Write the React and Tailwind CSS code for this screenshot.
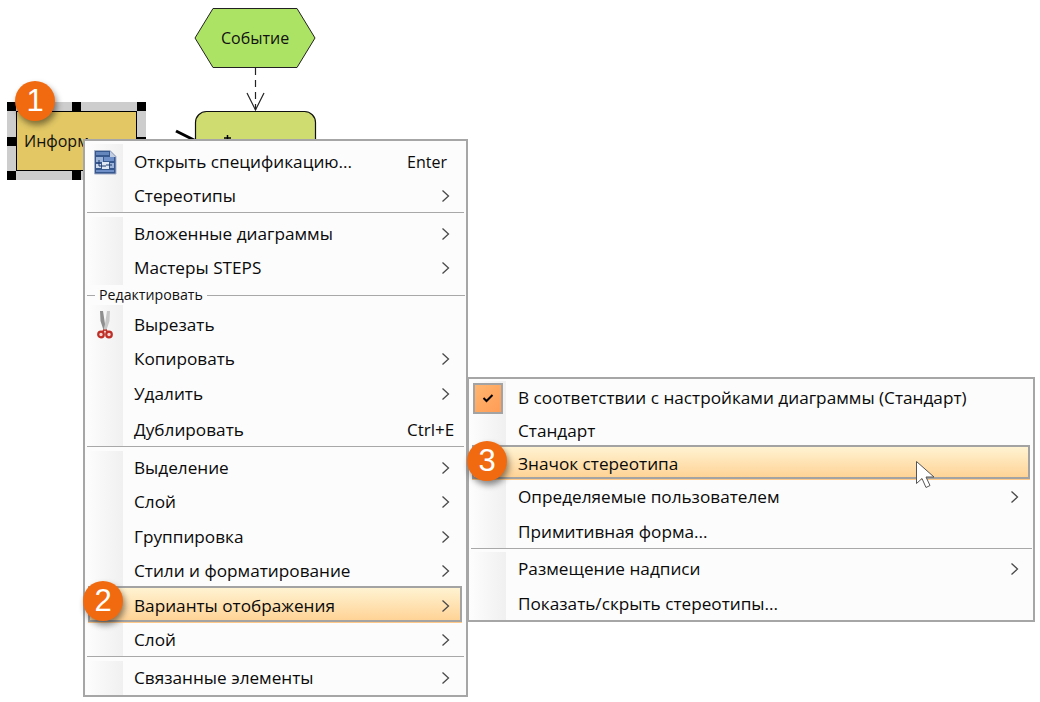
const font = { fontFamily: '"Open Sans", "Noto Sans", sans-serif' };

function Chevron() {
  return (
    <svg width="9" height="14" viewBox="0 0 9 14" className="shrink-0">
      <polyline points="1.5,1.5 7.5,7 1.5,12.5" fill="none" stroke="#4a4a4a" strokeWidth="1.3" />
    </svg>
  );
}

function SpecIcon() {
  return (
    <svg width="24" height="26" viewBox="0 0 24 26">
      <path d="M1.5 1.5 H17 L23 7.5 V25 H1.5 Z" fill="#37578f" stroke="#a7b1c6" strokeWidth="1" />
      <path d="M17 2 V8 H23 Z" fill="#c3cee0" />
      <rect x="3" y="3" width="13" height="3" fill="#6585bd" />
      <rect x="3" y="8" width="7" height="5" fill="#9db4da" />
      <rect x="11" y="8" width="10" height="4" fill="#6f8fc8" />
      <rect x="3" y="15" width="5" height="4" fill="#cdd9ec" />
      <rect x="9" y="13" width="7" height="7" fill="#dfe7f4" />
      <rect x="17" y="14" width="4" height="5" fill="#9db4da" />
      <rect x="3" y="21" width="18" height="2" fill="#6f8fc8" />
      <path d="M6 11 V17 H13 M13 16 H19" stroke="#1f3a6d" strokeWidth="1" fill="none" />
    </svg>
  );
}

function Scissors() {
  return (
    <svg width="16" height="28" viewBox="0 0 16 28">
      <path d="M3 0 L6 0 L8 13 L9.5 19 L6.5 19 L3.5 10 Z" fill="#8f8f8f" />
      <path d="M13 0 L10 0 L8 13 L6.5 19 L9.5 19 L12.5 10 Z" fill="#c8c8c8" />
      <circle cx="4" cy="23.5" r="2.8" fill="#f3d7d4" stroke="#bf2f27" strokeWidth="2.2" />
      <circle cx="12" cy="23.5" r="2.8" fill="#f3d7d4" stroke="#bf2f27" strokeWidth="2.2" />
      <path d="M6 20.5 L7.5 18.5 M10 20.5 L8.5 18.5" stroke="#bf2f27" strokeWidth="2" />
    </svg>
  );
}

function Row({ label, h, mt = 0, pad = 0, shortcut, shortcutClass = "", sub, icon, active, gutter = 37, textLeft = 48, right = 15 }) {
  return (
    <div className="relative flex shrink-0" style={{ height: h + pad, marginTop: mt }}>
      <div
        className="shrink-0 bg-gradient-to-r from-[#fdfdfd] to-[#f0f0f0] flex items-center justify-center"
        style={{ width: gutter, paddingTop: pad }}
      >
        {icon}
      </div>
      {active && (
        <div className="absolute left-[2px] right-[3px] top-[-2px] bottom-[1px] border-2 border-[#a3a3a3] bg-gradient-to-b from-[#fff3d2] to-[#ffd396] shadow-[0_1px_0_#ffc98a]" />
      )}
      <div
        className="relative flex-1 flex items-center justify-between text-[17.2px] text-[#0a0a0a]"
        style={{ paddingLeft: textLeft - gutter, paddingRight: right, paddingTop: pad }}
      >
        <span className="whitespace-nowrap">{label}</span>
        {shortcut && <span className={"absolute left-[284px] whitespace-nowrap " + shortcutClass}>{shortcut}</span>}
        {sub && <Chevron />}
      </div>
    </div>
  );
}

function Sep() {
  return <div className="h-px shrink-0 bg-[#a8a8a8] mx-[1px]" />;
}

function Badge({ n, className }) {
  return (
    <div
      className={
        "absolute w-[40px] h-[40px] rounded-full bg-[#f26a10] text-white flex items-center justify-center text-[31px] shadow-[2px_4px_6px_rgba(0,0,0,0.45)] " +
        className
      }
      style={{ fontFamily: '"Liberation Sans", sans-serif' }}
    >
      {n}
    </div>
  );
}

function Handle({ className }) {
  return <div className={"absolute w-[9px] h-[9px] bg-black " + className} />;
}

function Diagram() {
  return (
    <>
      <svg className="absolute left-0 top-0" width="340" height="180" viewBox="0 0 340 180">
        <polygon points="213,8.5 297,8.5 315,38 297,67.5 213,67.5 195,38" fill="#ade365" stroke="#222" strokeWidth="1" />
        <line x1="255.5" y1="68" x2="255.5" y2="110" stroke="#222" strokeWidth="1.2" strokeDasharray="7 5" />
        <polyline points="247,93 255.5,110 264,93" fill="none" stroke="#222" strokeWidth="1.2" />
        <rect x="195.5" y="111.5" width="120" height="70" rx="11" fill="#cfdc70" stroke="#111" strokeWidth="1.2" />
        <line x1="176" y1="131" x2="196" y2="141" stroke="#000" strokeWidth="3" />
        <path d="M227.5 135 V142 M224 138 H231" stroke="#000" strokeWidth="1.5" />
      </svg>
      <div className="absolute left-[221px] top-[26px] text-[16px] text-[#111]" style={font}>Событие</div>

      <div className="absolute left-[7px] top-[102px] w-[139px] h-[78px] border-[9px] border-[#cdcdcd]" />
      <div className="absolute left-[16px] top-[111px] w-[121px] h-[60px] bg-[#e2c764] border border-black flex items-center pl-[7px] text-[16px] text-[#111] overflow-hidden" style={font}>
        Информ
      </div>
      <Handle className="left-[7px] top-[102px]" />
      <Handle className="left-[72px] top-[102px]" />
      <Handle className="left-[137px] top-[102px]" />
      <Handle className="left-[7px] top-[137px]" />
      <Handle className="left-[137px] top-[137px]" />
      <Handle className="left-[7px] top-[171px]" />
      <Handle className="left-[72px] top-[171px]" />
      <Handle className="left-[137px] top-[171px]" />
    </>
  );
}

function MainMenu() {
  return (
    <div className="absolute left-[83px] top-[139px] w-[385px] h-[558px] bg-[#fcfcfc] border-2 border-[#a6a6a6] flex flex-col pt-[3px] pl-[1px] pr-[1px]" style={font}>
      <Row h={36} label="Открыть спецификацию..." shortcut="Enter" shortcutClass="text-[16px]" icon={<SpecIcon />} />
      <Row h={32} label="Стереотипы" sub />
      <Sep />
      <Row h={34} mt={4} label="Вложенные диаграммы" sub />
      <Row h={34} label="Мастеры STEPS" sub />
      <div className="h-[20px] shrink-0 flex items-center text-[14.2px] text-[#111]">
        <div className="h-px w-[8px] ml-[1px] bg-[#a8a8a8]" />
        <span className="px-[4px]">Редактировать</span>
        <div className="h-px flex-1 bg-[#a8a8a8]" />
      </div>
      <Row h={34} pad={3} label="Вырезать" icon={<Scissors />} />
      <Row h={34} label="Копировать" sub />
      <Row h={34} pad={1} label="Удалить" sub />
      <Row h={32} pad={3} label="Дублировать" shortcut="Ctrl+E" shortcutClass="text-[17px]" />
      <Sep />
      <Row h={34} mt={4} label="Выделение" sub />
      <Row h={34} label="Слой" sub />
      <Row h={34} pad={1} label="Группировка" sub />
      <Row h={34} label="Стили и форматирование" sub />
      <Row h={34} pad={1} label="Варианты отображения" sub active />
      <Row h={32} pad={1} label="Слой" sub />
      <Sep />
      <Row h={34} mt={4} label="Связанные элементы" sub />
    </div>
  );
}

function SubMenu() {
  const check = (
    <div className="w-[30px] h-[31px] border-2 border-[#a3a3a3] bg-gradient-to-br from-[#ffb56f] to-[#ff9c55] flex items-center justify-center">
      <svg width="12" height="10" viewBox="0 0 12 10">
        <polyline points="1.5,5 4.5,8 10.5,2" fill="none" stroke="#000" strokeWidth="2" />
      </svg>
    </div>
  );
  const p = { gutter: 36, textLeft: 48, right: 14 };
  return (
    <div className="absolute left-[468px] top-[377px] w-[567px] h-[245px] bg-[#fcfcfc] border-2 border-[#a6a6a6] border-l-[1px] flex flex-col pt-[2px] pl-[1px]" style={font}>
      <Row {...p} h={34} label="В соответствии с настройками диаграммы (Стандарт)" icon={check} />
      <Row {...p} h={32} label="Стандарт" />
      <Row {...p} h={33} label="Значок стереотипа" active />
      <Row {...p} h={33} label="Определяемые пользователем" sub />
      <Row {...p} h={33} pad={2} label="Примитивная форма..." />
      <Sep />
      <Row {...p} h={34} mt={3} label="Размещение надписи" sub />
      <Row {...p} h={33} pad={1} label="Показать/скрыть стереотипы..." />
    </div>
  );
}

function Cursor() {
  return (
    <svg className="absolute left-[915px] top-[460px]" width="22" height="30" viewBox="0 0 22 30">
      <path d="M1.5 1.5 V23.5 L7 18.5 L11 27.5 L15 25.5 L11 17 L19 17 Z" fill="#fff" stroke="#555" strokeWidth="1" />
    </svg>
  );
}

export default function App() {
  return (
    <div className="relative w-[1040px] h-[702px] bg-white overflow-hidden">
      <Diagram />
      <MainMenu />
      <SubMenu />
      <Cursor />
      <Badge n="1" className="left-[15px] top-[81px]" />
      <Badge n="2" className="left-[83px] top-[581px]" />
      <Badge n="3" className="left-[467px] top-[441px]" />
    </div>
  );
}
